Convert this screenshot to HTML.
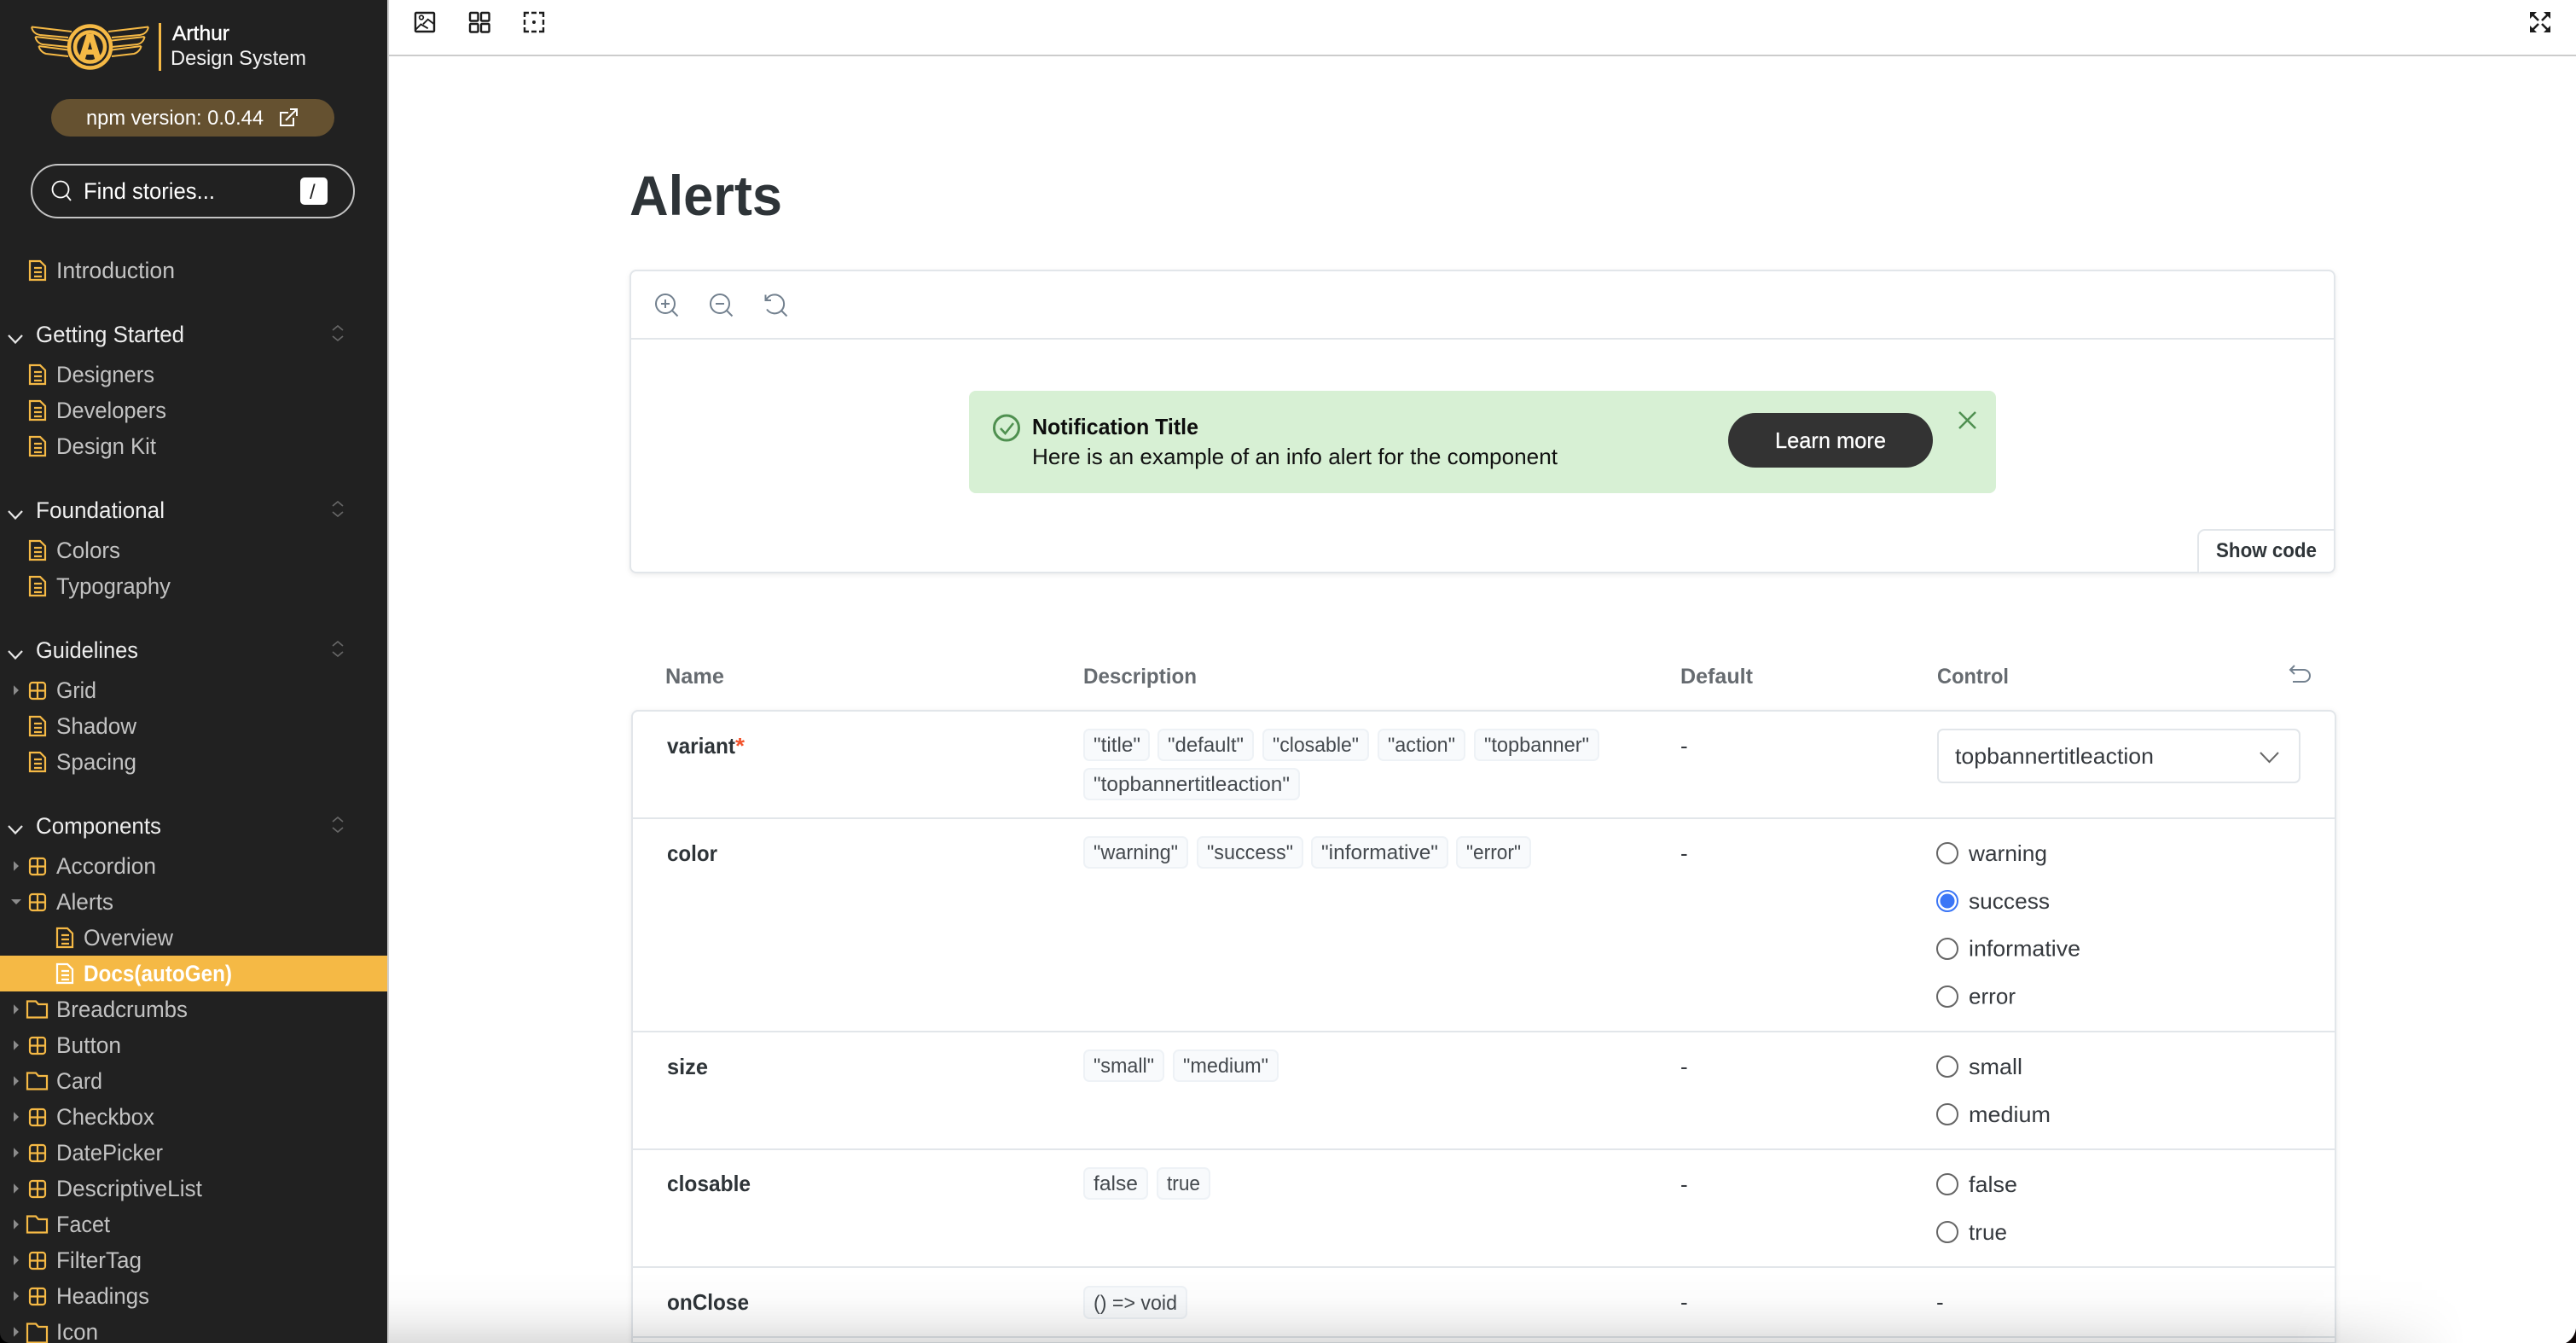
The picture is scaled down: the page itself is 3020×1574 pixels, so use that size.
<!DOCTYPE html>
<html lang="en">
<head>
<meta charset="utf-8">
<title>Alerts - Arthur Design System</title>
<style>
html,body{margin:0;padding:0;background:#fff;width:3020px;height:1574px;overflow:hidden}
svg{display:block}
text{font-family:"Liberation Sans",sans-serif;white-space:pre}
.n{font-size:27px;fill:#c3c3c3}
.h{font-size:27px;fill:#eeeeee}
.th{font-size:25px;font-weight:bold;fill:#666b70}
.nm{font-size:26px;font-weight:bold;fill:#2e3438}
.tg{font-size:24px;fill:#44494e}
.tb{fill:#f8fafc;stroke:#eef2f6;stroke-width:2}
.r{font-size:26px;fill:#35393e}
.ro{fill:#fff;stroke:#666;stroke-width:2}
.sep{fill:#e2e6ea}
</style>
</head>
<body>
<svg xmlns="http://www.w3.org/2000/svg" width="3020" height="1574" viewBox="0 0 3020 1574">
<defs>
<g id="doc" fill="none" stroke="#f5b945" stroke-width="2.2"><path d="M1 -11 H13 L19 -5 V11 H1 Z"/><path d="M6 -3 H15 M6 2 H15 M6 7 H15"/></g>
<g id="docw" fill="none" stroke="#fff" stroke-width="2.2"><path d="M1 -11 H13 L19 -5 V11 H1 Z"/><path d="M6 -3 H15 M6 2 H15 M6 7 H15"/></g>
<g id="cmp" fill="none" stroke="#f5b945" stroke-width="2.2"><rect x="1" y="-9" width="18" height="19" rx="3"/><path d="M10 -9 V10 M1 0.5 H19"/></g>
<g id="fld" fill="none" stroke="#f5b945" stroke-width="2.2"><path d="M-1 -9.5 H9 L12 -6 H22 V9.5 H-1 Z"/></g>
<path id="tri" d="M16 -5.7 L22 0 L16 5.7 Z" fill="#8b8b8b"/>
<path id="chv" d="M10 -4 L18 4.5 L26 -4" fill="none" stroke="#e6e6e6" stroke-width="2.2"/>
<path id="exp" d="M390 -4 L396 -9 L402 -4 M390 3 L396 8 L402 3" fill="none" stroke="#666" stroke-width="1.7"/>
<linearGradient id="vfade" gradientUnits="userSpaceOnUse" x1="0" y1="1490" x2="0" y2="1574">
  <stop offset="0" stop-color="#000" stop-opacity="0"/>
  <stop offset=".4" stop-color="#000" stop-opacity=".015"/>
  <stop offset=".7" stop-color="#000" stop-opacity=".06"/>
  <stop offset="1" stop-color="#000" stop-opacity=".13"/>
</linearGradient>
<linearGradient id="hfade" gradientUnits="userSpaceOnUse" x1="2690" y1="0" x2="2890" y2="0">
  <stop offset="0" stop-color="#fff"/>
  <stop offset=".5" stop-color="#808080"/>
  <stop offset="1" stop-color="#000"/>
</linearGradient>
<mask id="hmask" maskUnits="userSpaceOnUse" x="456" y="1490" width="2564" height="84"><rect x="456" y="1490" width="2564" height="84" fill="url(#hfade)"/></mask>
</defs>

<!-- Top toolbar -->
<rect x="456" y="64" width="2564" height="2" fill="#cccccc"/>
<g fill="none" stroke="#1c1c1c" stroke-width="2.4">
  <rect x="487" y="15" width="22" height="22" rx="1"/>
  <circle cx="494" cy="20.5" r="2.3" stroke-width="1.7"/>
  <path d="M487 35 L493.5 28.5 L501.7 33.3 M496 28.3 L501.7 22.7 L509 28.3" stroke-width="1.9"/>
  <rect x="551" y="15" width="9.5" height="9.5" rx="1"/>
  <rect x="564" y="15" width="9.5" height="9.5" rx="1"/>
  <rect x="551" y="28" width="9.5" height="9.5" rx="1"/>
  <rect x="564" y="28" width="9.5" height="9.5" rx="1"/>
  <path d="M615 20 V15 H620 M623 15 H629 M632 15 H637 V20 M637 23 V29 M637 32 V37 H632 M629 37 H623 M620 37 H615 V32 M615 29 V23"/>
  <path d="M2969 17 L2976 24 M2987 17 L2980 24 M2969 35 L2976 28 M2987 35 L2980 28" stroke-width="2.6"/>
</g>
<circle cx="626" cy="26" r="2" fill="#1c1c1c"/>
<path d="M2966 14 H2974 L2966 22 Z M2990 14 H2982 L2990 22 Z M2966 38 H2974 L2966 30 Z M2990 38 H2982 L2990 30 Z" fill="#1c1c1c"/>

<!-- Title -->
<text x="738" y="252" font-size="66" font-weight="bold" fill="#2e3438" textLength="179" lengthAdjust="spacingAndGlyphs">Alerts</text>

<!-- Preview box -->
<rect x="739" y="317" width="1998" height="354" rx="7" fill="#fff" stroke="#e2e6ea" stroke-width="2" style="filter:drop-shadow(0 2px 3px rgba(0,0,0,.07))"/>
<rect x="740" y="396" width="1996" height="2" class="sep"/>
<g fill="none" stroke="#73818f" stroke-width="2">
  <circle cx="780" cy="356" r="11"/><path d="M788 364 L794.5 370.5 M775 356 H785 M780 351 V361"/>
  <circle cx="844" cy="356" r="11"/><path d="M852 364 L858.5 370.5 M839 356 H849"/>
  <path d="M898.5 351 A11 11 0 1 1 899 362.5 M897.5 345.5 V352 H904 M916 364 L922.5 370.5"/>
</g>

<!-- Alert -->
<rect x="1136" y="458" width="1204" height="120" rx="8" fill="#d7f0d4"/>
<circle cx="1180" cy="501.5" r="14.5" fill="none" stroke="#4f9050" stroke-width="3"/>
<path d="M1173 502 L1178.5 508 L1188 496" fill="none" stroke="#4f9050" stroke-width="2.6"/>
<text x="1210" y="509" font-size="26" font-weight="bold" fill="#0d0d0d" textLength="195" lengthAdjust="spacingAndGlyphs">Notification Title</text>
<text x="1210" y="544" font-size="26" fill="#111" textLength="616" lengthAdjust="spacingAndGlyphs">Here is an example of an info alert for the component</text>
<rect x="2026" y="484" width="240" height="64" rx="32" fill="#333333"/>
<text x="2081" y="525" font-size="26" fill="#fff" stroke="#fff" stroke-width=".3" textLength="130" lengthAdjust="spacingAndGlyphs">Learn more</text>
<path d="M2297 483 L2316 502 M2316 483 L2297 502" stroke="#4f9050" stroke-width="2.5" fill="none"/>

<!-- Show code -->
<path d="M2577 671 V629 A8 8 0 0 1 2585 621 H2737" fill="#fff" stroke="#e2e6ea" stroke-width="2"/>
<text x="2598" y="653" font-size="24" font-weight="bold" fill="#2e3438" textLength="118" lengthAdjust="spacingAndGlyphs">Show code</text>

<!-- Table header -->
<text class="th" x="780" y="801" textLength="69" lengthAdjust="spacingAndGlyphs">Name</text>
<text class="th" x="1270" y="801" textLength="133" lengthAdjust="spacingAndGlyphs">Description</text>
<text class="th" x="1970" y="801" textLength="85" lengthAdjust="spacingAndGlyphs">Default</text>
<text class="th" x="2271" y="801" textLength="84" lengthAdjust="spacingAndGlyphs">Control</text>
<path d="M2690 780 L2685 785 L2690 790 M2685 785 H2701 A7 7 0 0 1 2701 799 H2688" fill="none" stroke="#73818f" stroke-width="2"/>

<!-- Table -->
<path d="M741 1574 V840 A7 7 0 0 1 748 833 H2731 A7 7 0 0 1 2738 840 V1574 Z" fill="#fff" stroke="#e2e6ea" stroke-width="2" style="filter:drop-shadow(0 1px 3px rgba(0,0,0,.08))"/>
<rect x="742" y="958" width="1995" height="2" class="sep"/>
<rect x="742" y="1208" width="1995" height="2" class="sep"/>
<rect x="742" y="1346" width="1995" height="2" class="sep"/>
<rect x="742" y="1484" width="1995" height="2" class="sep"/>
<rect x="742" y="1566" width="1995" height="2" class="sep"/>

<!-- Row names -->
<text class="nm" x="782" y="883" textLength="80" lengthAdjust="spacingAndGlyphs">variant</text>
<text x="862" y="883" font-size="26" font-weight="bold" fill="#f2542d" textLength="11" lengthAdjust="spacingAndGlyphs">*</text>
<text class="nm" x="782" y="1009" textLength="59" lengthAdjust="spacingAndGlyphs">color</text>
<text class="nm" x="782" y="1259" textLength="48" lengthAdjust="spacingAndGlyphs">size</text>
<text class="nm" x="782" y="1396" textLength="98" lengthAdjust="spacingAndGlyphs">closable</text>
<text class="nm" x="782" y="1535" textLength="96" lengthAdjust="spacingAndGlyphs">onClose</text>

<!-- Tags row 1 -->
<rect class="tb" x="1271" y="855" width="76" height="36" rx="6"/><text class="tg" x="1282" y="881" textLength="55" lengthAdjust="spacingAndGlyphs">"title"</text>
<rect class="tb" x="1358" y="855" width="111" height="36" rx="6"/><text class="tg" x="1369" y="881" textLength="89" lengthAdjust="spacingAndGlyphs">"default"</text>
<rect class="tb" x="1481" y="855" width="123" height="36" rx="6"/><text class="tg" x="1492" y="881" textLength="101" lengthAdjust="spacingAndGlyphs">"closable"</text>
<rect class="tb" x="1616" y="855" width="101" height="36" rx="6"/><text class="tg" x="1627" y="881" textLength="79" lengthAdjust="spacingAndGlyphs">"action"</text>
<rect class="tb" x="1729" y="855" width="145" height="36" rx="6"/><text class="tg" x="1740" y="881" textLength="123" lengthAdjust="spacingAndGlyphs">"topbanner"</text>
<rect class="tb" x="1271" y="901" width="252" height="36" rx="6"/><text class="tg" x="1282" y="927" textLength="230" lengthAdjust="spacingAndGlyphs">"topbannertitleaction"</text>
<!-- Tags row 2 -->
<rect class="tb" x="1271" y="981" width="121" height="36" rx="6"/><text class="tg" x="1282" y="1007" textLength="99" lengthAdjust="spacingAndGlyphs">"warning"</text>
<rect class="tb" x="1404" y="981" width="123" height="36" rx="6"/><text class="tg" x="1415" y="1007" textLength="101" lengthAdjust="spacingAndGlyphs">"success"</text>
<rect class="tb" x="1538" y="981" width="159" height="36" rx="6"/><text class="tg" x="1549" y="1007" textLength="137" lengthAdjust="spacingAndGlyphs">"informative"</text>
<rect class="tb" x="1708" y="981" width="86" height="36" rx="6"/><text class="tg" x="1719" y="1007" textLength="64" lengthAdjust="spacingAndGlyphs">"error"</text>
<!-- Tags row 3 -->
<rect class="tb" x="1271" y="1231" width="93" height="36" rx="6"/><text class="tg" x="1282" y="1257" textLength="71" lengthAdjust="spacingAndGlyphs">"small"</text>
<rect class="tb" x="1376" y="1231" width="122" height="36" rx="6"/><text class="tg" x="1387" y="1257" textLength="100" lengthAdjust="spacingAndGlyphs">"medium"</text>
<!-- Tags row 4 -->
<rect class="tb" x="1271" y="1369" width="74" height="36" rx="6"/><text class="tg" x="1282" y="1395" textLength="52" lengthAdjust="spacingAndGlyphs">false</text>
<rect class="tb" x="1357" y="1369" width="61" height="36" rx="6"/><text class="tg" x="1368" y="1395" textLength="39" lengthAdjust="spacingAndGlyphs">true</text>
<!-- Tags row 5 -->
<rect class="tb" x="1271" y="1508" width="120" height="37" rx="6"/><text class="tg" x="1282" y="1535" textLength="98" lengthAdjust="spacingAndGlyphs">() =&gt; void</text>

<!-- Default dashes -->
<text class="r" x="1970" y="883">-</text>
<text class="r" x="1970" y="1009">-</text>
<text class="r" x="1970" y="1259">-</text>
<text class="r" x="1970" y="1397">-</text>
<text class="r" x="1970" y="1535">-</text>
<text class="r" x="2270" y="1535">-</text>

<!-- Select -->
<rect x="2272" y="855" width="424" height="62" rx="6" fill="#fff" stroke="#e2e6ea" stroke-width="2"/>
<text class="r" x="2292" y="895" font-size="27" textLength="233" lengthAdjust="spacingAndGlyphs">topbannertitleaction</text>
<path d="M2650 882 L2660.5 893 L2671 882" fill="none" stroke="#666" stroke-width="2"/>

<!-- Radios -->
<circle class="ro" cx="2283" cy="1000" r="12"/><text class="r" x="2308" y="1009" textLength="92" lengthAdjust="spacingAndGlyphs">warning</text>
<circle cx="2283" cy="1056" r="12" fill="#fff" stroke="#3b76f6" stroke-width="2"/><circle cx="2283" cy="1056" r="8.5" fill="#3b76f6"/><text class="r" x="2308" y="1065" textLength="95" lengthAdjust="spacingAndGlyphs">success</text>
<circle class="ro" cx="2283" cy="1112" r="12"/><text class="r" x="2308" y="1120.5" textLength="131" lengthAdjust="spacingAndGlyphs">informative</text>
<circle class="ro" cx="2283" cy="1168" r="12"/><text class="r" x="2308" y="1176.5" textLength="55" lengthAdjust="spacingAndGlyphs">error</text>
<circle class="ro" cx="2283" cy="1250" r="12"/><text class="r" x="2308" y="1259" textLength="63" lengthAdjust="spacingAndGlyphs">small</text>
<circle class="ro" cx="2283" cy="1306" r="12"/><text class="r" x="2308" y="1315" textLength="96" lengthAdjust="spacingAndGlyphs">medium</text>
<circle class="ro" cx="2283" cy="1388" r="12"/><text class="r" x="2308" y="1397" textLength="57" lengthAdjust="spacingAndGlyphs">false</text>
<circle class="ro" cx="2283" cy="1444" r="12"/><text class="r" x="2308" y="1453" textLength="45" lengthAdjust="spacingAndGlyphs">true</text>

<!-- Bottom fade -->
<rect x="456" y="1490" width="2564" height="84" fill="url(#vfade)" mask="url(#hmask)"/>

<!-- Sidebar -->
<rect x="0" y="0" width="454" height="1574" fill="#212121"/>
<rect x="454" y="0" width="2" height="1574" fill="#cfcfcf"/>

<!-- Logo -->
<g fill="none" stroke="#f5b945" stroke-width="2">
  <path d="M37 31.5 L84 37 M37 31.5 C38 37 41 40 47 41 L80 44"/>
  <path d="M41.5 43 L80 47.5 M41.5 43 C42 47 45 51 50 52 L80 55"/>
  <path d="M45.5 54 L80 58.5 M45.5 54 C46 58 50 62 54 63 L80 66"/>
  <path d="M174 31.5 L127 37 M174 31.5 C173 37 170 40 164 41 L131 44"/>
  <path d="M169.5 43 L131 47.5 M169.5 43 C169 47 166 51 161 52 L131 55"/>
  <path d="M165.5 54 L131 58.5 M165.5 54 C165 58 161 62 157 63 L131 66"/>
</g>
<circle cx="105.5" cy="55" r="24.5" fill="#212121" stroke="#f5b945" stroke-width="4.5"/>
<circle cx="105.5" cy="55" r="17.5" fill="#212121" stroke="#f5b945" stroke-width="4.5"/>
<path d="M101.5 40 H109.500 L119 70 H111.500 L109.500 64 H101.500 L99.500 70 H92 Z" fill="#f5b945"/>
<path d="M105.5 49 L103 58 H108 Z" fill="#212121"/>
<rect x="186" y="27" width="3" height="56" fill="#f5b945"/>
<text x="202" y="47" font-size="24" fill="#fff" stroke="#fff" stroke-width=".4" textLength="67" lengthAdjust="spacingAndGlyphs">Arthur</text>
<text x="200" y="76" font-size="24" fill="#f4f4f4" textLength="159" lengthAdjust="spacingAndGlyphs">Design System</text>

<!-- npm pill -->
<rect x="60" y="116" width="332" height="44" rx="22" fill="#655130"/>
<text x="101" y="146" font-size="24" fill="#fff" textLength="208" lengthAdjust="spacingAndGlyphs">npm version: 0.0.44</text>
<path d="M338 132 H329 V147 H344 V138 M335 141 L348 128 M340 128 H348 V136" fill="none" stroke="#fff" stroke-width="2"/>

<!-- Search -->
<rect x="37" y="193" width="378" height="62" rx="31" fill="none" stroke="#c4c4c4" stroke-width="2"/>
<circle cx="71" cy="222" r="9.5" fill="none" stroke="#fff" stroke-width="1.8"/>
<path d="M78 229 L83 235" stroke="#fff" stroke-width="1.8"/>
<text x="98" y="233" font-size="27" fill="#fff" textLength="154" lengthAdjust="spacingAndGlyphs">Find stories...</text>
<rect x="352" y="208" width="32" height="32" rx="5" fill="#fff"/>
<text x="363" y="233" font-size="24" fill="#222">/</text>

<!-- Nav -->
<use href="#doc" x="34" y="317"/><text class="n" x="66" y="326" textLength="139" lengthAdjust="spacingAndGlyphs">Introduction</text>

<use href="#chv" y="397"/><use href="#exp" y="391"/><text class="h" x="42" y="401" textLength="174" lengthAdjust="spacingAndGlyphs">Getting Started</text>
<use href="#doc" x="34" y="439"/><text class="n" x="66" y="448" textLength="115" lengthAdjust="spacingAndGlyphs">Designers</text>
<use href="#doc" x="34" y="481"/><text class="n" x="66" y="490" textLength="129" lengthAdjust="spacingAndGlyphs">Developers</text>
<use href="#doc" x="34" y="523"/><text class="n" x="66" y="532" textLength="117" lengthAdjust="spacingAndGlyphs">Design Kit</text>

<use href="#chv" y="603"/><use href="#exp" y="597"/><text class="h" x="42" y="607" textLength="151" lengthAdjust="spacingAndGlyphs">Foundational</text>
<use href="#doc" x="34" y="645"/><text class="n" x="66" y="654" textLength="75" lengthAdjust="spacingAndGlyphs">Colors</text>
<use href="#doc" x="34" y="687"/><text class="n" x="66" y="696" textLength="134" lengthAdjust="spacingAndGlyphs">Typography</text>

<use href="#chv" y="767"/><use href="#exp" y="761"/><text class="h" x="42" y="771" textLength="120" lengthAdjust="spacingAndGlyphs">Guidelines</text>
<use href="#tri" y="809"/><use href="#cmp" x="34" y="809"/><text class="n" x="66" y="818" textLength="47" lengthAdjust="spacingAndGlyphs">Grid</text>
<use href="#doc" x="34" y="851"/><text class="n" x="66" y="860" textLength="94" lengthAdjust="spacingAndGlyphs">Shadow</text>
<use href="#doc" x="34" y="893"/><text class="n" x="66" y="902" textLength="94" lengthAdjust="spacingAndGlyphs">Spacing</text>

<use href="#chv" y="972"/><use href="#exp" y="967"/><text class="h" x="42" y="977" textLength="147" lengthAdjust="spacingAndGlyphs">Components</text>
<use href="#tri" y="1015"/><use href="#cmp" x="34" y="1015"/><text class="n" x="66" y="1024" textLength="117" lengthAdjust="spacingAndGlyphs">Accordion</text>
<path d="M13 1054 H25 L19 1060 Z" fill="#8b8b8b"/><use href="#cmp" x="34" y="1057"/><text class="n" x="66" y="1066" textLength="67" lengthAdjust="spacingAndGlyphs">Alerts</text>
<use href="#doc" x="66" y="1099"/><text class="n" x="98" y="1108" textLength="105" lengthAdjust="spacingAndGlyphs">Overview</text>
<rect x="0" y="1120" width="454" height="42" fill="#f5b945"/>
<use href="#docw" x="66" y="1141"/><text x="98" y="1150" font-size="27" font-weight="bold" fill="#fff" textLength="174" lengthAdjust="spacingAndGlyphs">Docs(autoGen)</text>
<use href="#tri" y="1183"/><use href="#fld" x="33" y="1183"/><text class="n" x="66" y="1192" textLength="154" lengthAdjust="spacingAndGlyphs">Breadcrumbs</text>
<use href="#tri" y="1225"/><use href="#cmp" x="34" y="1225"/><text class="n" x="66" y="1234" textLength="76" lengthAdjust="spacingAndGlyphs">Button</text>
<use href="#tri" y="1267"/><use href="#fld" x="33" y="1267"/><text class="n" x="66" y="1276" textLength="54" lengthAdjust="spacingAndGlyphs">Card</text>
<use href="#tri" y="1309"/><use href="#cmp" x="34" y="1309"/><text class="n" x="66" y="1318" textLength="115" lengthAdjust="spacingAndGlyphs">Checkbox</text>
<use href="#tri" y="1351"/><use href="#cmp" x="34" y="1351"/><text class="n" x="66" y="1360" textLength="125" lengthAdjust="spacingAndGlyphs">DatePicker</text>
<use href="#tri" y="1393"/><use href="#cmp" x="34" y="1393"/><text class="n" x="66" y="1402" textLength="171" lengthAdjust="spacingAndGlyphs">DescriptiveList</text>
<use href="#tri" y="1435"/><use href="#fld" x="33" y="1435"/><text class="n" x="66" y="1444" textLength="63" lengthAdjust="spacingAndGlyphs">Facet</text>
<use href="#tri" y="1477"/><use href="#cmp" x="34" y="1477"/><text class="n" x="66" y="1486" textLength="100" lengthAdjust="spacingAndGlyphs">FilterTag</text>
<use href="#tri" y="1519"/><use href="#cmp" x="34" y="1519"/><text class="n" x="66" y="1528" textLength="109" lengthAdjust="spacingAndGlyphs">Headings</text>
<use href="#tri" y="1561"/><path d="M32 1551.5 H42 L45 1555 H55 V1573.5 H32 Z" fill="none" stroke="#f5b945" stroke-width="2.2"/><text class="n" x="66" y="1570" textLength="49" lengthAdjust="spacingAndGlyphs">Icon</text>

<!-- Window corners -->
<path d="M0 1562 A12 12 0 0 0 12 1574 H0 Z" fill="#000"/>
<path d="M3020 1552 A22 22 0 0 1 3008 1574 H3020 Z" fill="#0d0505"/>
</svg>
</body>
</html>
